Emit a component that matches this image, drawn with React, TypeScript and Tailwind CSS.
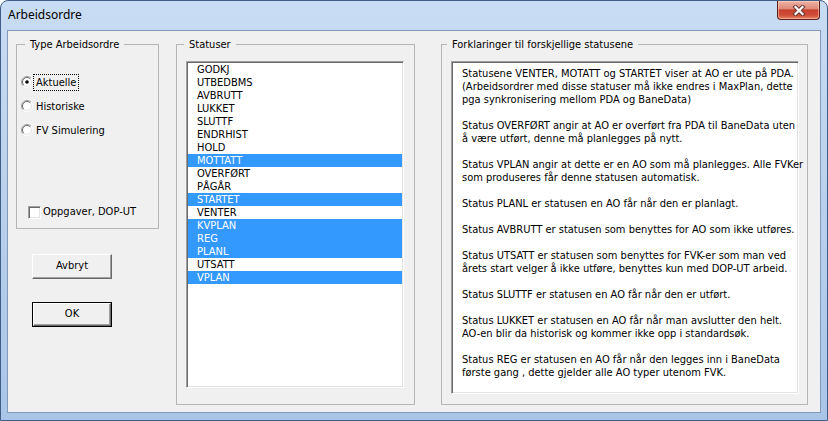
import React from "react";

const statuses: [string, boolean][] = [
  ["GODKJ", false],
  ["UTBEDBMS", false],
  ["AVBRUTT", false],
  ["LUKKET", false],
  ["SLUTTF", false],
  ["ENDRHIST", false],
  ["HOLD", false],
  ["MOTTATT", true],
  ["OVERFØRT", false],
  ["PÅGÅR", false],
  ["STARTET", true],
  ["VENTER", false],
  ["KVPLAN", true],
  ["REG", true],
  ["PLANL", true],
  ["UTSATT", false],
  ["VPLAN", true],
];

const lines = [
  "Statusene VENTER, MOTATT og STARTET viser at AO er ute på PDA.",
  "(Arbeidsordrer med disse statuser må ikke endres i MaxPlan, dette",
  "pga synkronisering mellom PDA og BaneData)",
  "",
  "Status OVERFØRT angir at AO er overført fra PDA til BaneData uten",
  "å være utført, denne må planlegges på nytt.",
  "",
  "Status VPLAN angir at dette er en AO som må planlegges. Alle FVKer",
  "som produseres får denne statusen automatisk.",
  "",
  "Status PLANL er statusen en AO får når den er planlagt.",
  "",
  "Status AVBRUTT er statusen som benyttes for AO som ikke utføres.",
  "",
  "Status UTSATT er statusen som benyttes for FVK-er som man ved",
  "årets start velger å ikke utføre, benyttes kun med DOP-UT arbeid.",
  "",
  "Status SLUTTF er statusen en AO får når den er utført.",
  "",
  "Status LUKKET er statusen en AO får når man avslutter den helt.",
  "AO-en blir da historisk og kommer ikke opp i standardsøk.",
  "",
  "Status REG er statusen en AO får når den legges inn i BaneData",
  "første gang , dette gjelder alle AO typer utenom FVK.",
];

function CloseButton() {
  return (
    <div className="mr-[1px] flex h-[19px] w-[43px] items-center justify-center rounded-b-[4px] border border-t-0 border-[#5b2019] bg-[linear-gradient(180deg,#eeb3a6_0%,#e08a78_42%,#c8402f_50%,#cf4c37_78%,#e6845f_100%)] shadow-[inset_0_0_0_1px_rgba(255,220,210,0.5)]">
      <svg width="14" height="11" viewBox="0 0 14 11">
        <path d="M3.5 2 L10.5 9 M10.5 2 L3.5 9" stroke="#6a3a34" strokeWidth="4.2" strokeLinecap="square" />
        <path d="M3.5 2 L10.5 9 M10.5 2 L3.5 9" stroke="#ffffff" strokeWidth="2.2" strokeLinecap="square" />
      </svg>
    </div>
  );
}

function Radio({ checked }: { checked?: boolean }) {
  return (
    <svg width="12" height="12" viewBox="0 0 12 12" className="shrink-0">
      <circle cx="6" cy="6" r="5" fill="#ffffff" />
      <path d="M9.9 2.1 A5.5 5.5 0 0 0 2.1 9.9" stroke="#a0a0a0" fill="none" />
      <path d="M9.2 2.8 A4.5 4.5 0 0 0 2.8 9.2" stroke="#696969" fill="none" />
      <path d="M9.9 2.1 A5.5 5.5 0 0 1 2.1 9.9" stroke="#ffffff" fill="none" />
      <path d="M9.2 2.8 A4.5 4.5 0 0 1 2.8 9.2" stroke="#e3e3e3" fill="none" />
      {checked && <circle cx="6" cy="6" r="1.8" fill="#000000" />}
    </svg>
  );
}

function RadioRow({ label, checked, focus }: { label: string; checked?: boolean; focus?: boolean }) {
  return (
    <div className="flex h-[24px] items-center pl-[4px]">
      <Radio checked={checked} />
      <span className={"border px-[2px] leading-[15px] " + (focus ? "border-dotted border-black" : "border-transparent")}>
        {label}
      </span>
    </div>
  );
}

function Button({ label, isDefault }: { label: string; isDefault?: boolean }) {
  const face = (
    <div className="flex h-full w-full items-center justify-center border border-t-white border-l-white border-r-[#696969] border-b-[#696969] bg-[#f0f0f0] shadow-[inset_-1px_-1px_0_#a0a0a0]">
      {label}
    </div>
  );
  return (
    <div className={"ml-[16px] h-[25px] w-[80px] " + (isDefault ? "border border-black" : "")}>{face}</div>
  );
}

export default function App() {
  return (
    <div className="h-[421px] w-[828px] overflow-hidden bg-white font-['DejaVu_Sans_Condensed','Liberation_Sans',Arial,sans-serif] text-[11px] text-black">
      <div className="flex h-full flex-col rounded-t-[8px] border border-[#3f5d85] bg-[linear-gradient(180deg,#c8dcf3_0%,#bcd2ed_40%,#a9c5e8_100%)] px-[6px] pb-[7px]">
        <div className="flex h-[29px] shrink-0 items-start justify-between">
          <span className="ml-[1px] mt-[6px] font-['Noto_Sans',sans-serif] text-[12px] leading-[16px]">Arbeidsordre</span>
          <CloseButton />
        </div>

        <div className="flex flex-1 items-start border border-[#8199bb] bg-[#f0f0f0] pl-[8px] pt-[7px]">
          {/* left column */}
          <div className="flex w-[143px] flex-col">
            <fieldset className="h-[191px] border border-[#b5b5b5]">
              <legend className="ml-[8px] px-[5px] leading-[13px]">Type Arbeidsordre</legend>
              <div className="pt-[19px]">
                <RadioRow label="Aktuelle" checked focus />
                <RadioRow label="Historiske" />
                <RadioRow label="FV Simulering" />
              </div>
              <div className="mt-[62px] flex h-[17px] items-center gap-[2px] pl-[11px]">
                <div className="h-[13px] w-[13px] border border-t-[#a0a0a0] border-l-[#a0a0a0] border-r-white border-b-white bg-white shadow-[inset_1px_1px_0_#696969,inset_-1px_-1px_0_#e3e3e3]" />
                <span>Oppgaver, DOP-UT</span>
              </div>
            </fieldset>
            <div className="mt-[25px]">
              <Button label="Avbryt" />
            </div>
            <div className="mt-[23px]">
              <Button label="OK" isDefault />
            </div>
          </div>

          {/* statuser */}
          <fieldset className="ml-[17px] h-[367px] w-[239px] border border-[#b5b5b5]">
            <legend className="ml-[7px] px-[5px] leading-[13px]">Statuser</legend>
            <div className="ml-[9px] mt-[10px] h-[327px] w-[218px] border border-t-[#a0a0a0] border-l-[#a0a0a0] border-r-white border-b-white bg-white p-[1px] shadow-[inset_1px_1px_0_#696969,inset_-1px_-1px_0_#e3e3e3]">
              {statuses.map(([name, sel]) => (
                <div
                  key={name}
                  className={"h-[13px] pl-[9px] leading-[13px] " + (sel ? "bg-[#3399ff] text-white" : "")}
                >
                  {name}
                </div>
              ))}
            </div>
          </fieldset>

          {/* forklaringer */}
          <fieldset className="ml-[26px] h-[367px] w-[367px] border border-[#b5b5b5]">
            <legend className="ml-[5px] px-[5px] leading-[13px]">Forklaringer til forskjellige statusene</legend>
            <div className="ml-[9px] mt-[10px] h-[333px] w-[348px] border border-t-[#a0a0a0] border-l-[#a0a0a0] border-r-white border-b-white bg-white px-[10px] pt-[5px] shadow-[inset_1px_1px_0_#696969,inset_-1px_-1px_0_#e3e3e3]">
              {lines.map((l, i) => (
                <div key={i} className="h-[13px] whitespace-nowrap leading-[13px]">
                  {l}
                </div>
              ))}
            </div>
          </fieldset>
        </div>
      </div>
    </div>
  );
}
